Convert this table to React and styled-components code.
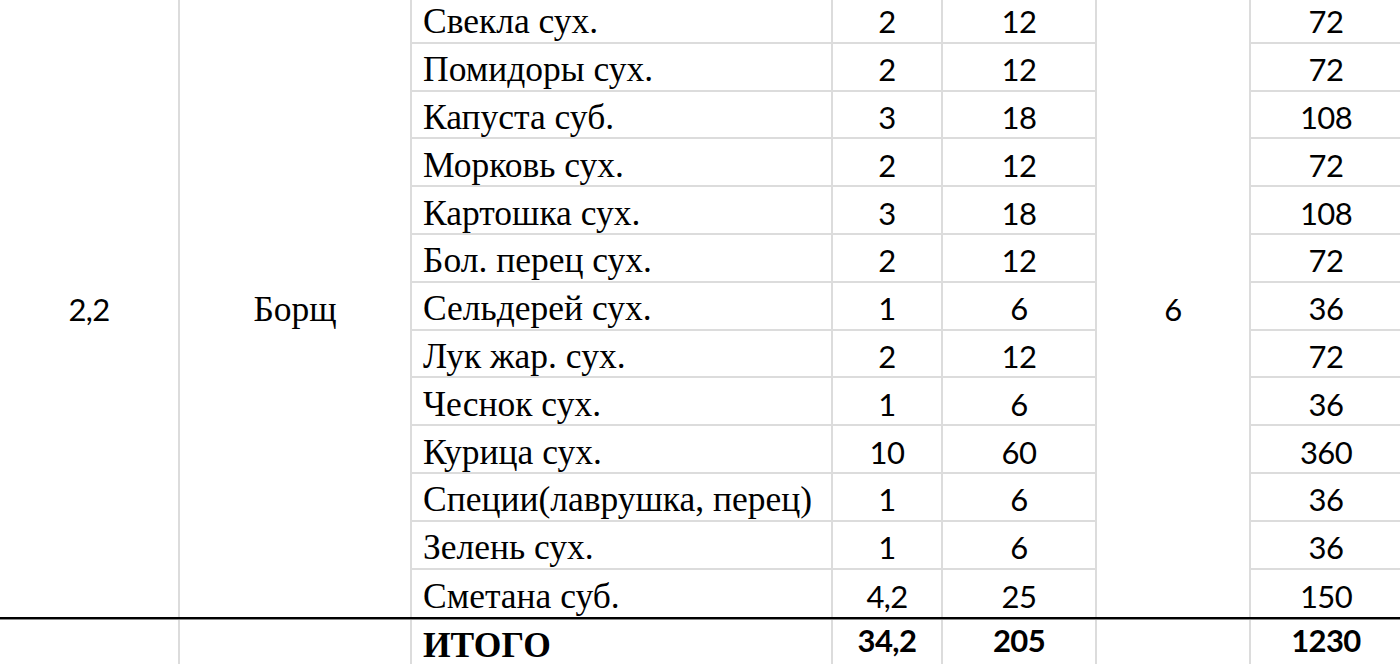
import React from "react";
import styled, { createGlobalStyle, css } from "styled-components";

const Global = createGlobalStyle`
  html, body { margin: 0; padding: 0; background: #fff; }
  body { width: 1400px; height: 664px; overflow: hidden; }
`;

const LINE = "#dcdcdc";

const Sheet = styled.div`
  display: grid;
  grid-template-columns: 180px 232px 421px 110px 154px 154px 152px;
  grid-template-rows: repeat(13, 47.8px) 3px 48px;
  margin-top: -4px;
  width: 1403px;
`;

const serif = css`
  font-family: "Liberation Serif", "Times New Roman", serif;
  font-size: 35.5px;
  padding-top: 5px;
`;
const sans = css`
  font-family: Lato, "Noto Sans", sans-serif;
  font-size: 31px;
  letter-spacing: -0.6px;
  padding-top: 5px;
`;

const Cell = styled.div`
  box-sizing: border-box;
  display: flex;
  align-items: center;
  justify-content: ${(p) => (p.$left ? "flex-start" : "center")};
  padding-left: ${(p) => (p.$left ? "11px" : "0")};
  border-right: 2px solid ${LINE};
  border-bottom: ${(p) => (p.$noBottom ? "none" : `2px solid ${LINE}`)};
  color: #000;
  white-space: nowrap;
  font-weight: ${(p) => (p.$bold ? 700 : 400)};
  ${(p) => (p.$serif ? serif : sans)};
`;

const Merged = styled(Cell)`
  grid-row: 1 / span 13;
  grid-column: ${(p) => p.$col};
  border-bottom: none;
`;

const TotalCell = styled(Cell)`
  border-bottom: none;
  align-items: flex-start;
  padding-top: ${(p) => (p.$serif ? "4px" : "1px")};
`;

const Rule = styled.div`
  grid-column: 1 / -1;
  background: #000;
  border-bottom: 1px solid #8a8a8a;
  box-sizing: border-box;
`;

const rows = [
  ["Свекла сух.", "2", "12", "72"],
  ["Помидоры сух.", "2", "12", "72"],
  ["Капуста суб.", "3", "18", "108"],
  ["Морковь сух.", "2", "12", "72"],
  ["Картошка сух.", "3", "18", "108"],
  ["Бол. перец сух.", "2", "12", "72"],
  ["Сельдерей сух.", "1", "6", "36"],
  ["Лук жар. сух.", "2", "12", "72"],
  ["Чеснок сух.", "1", "6", "36"],
  ["Курица сух.", "10", "60", "360"],
  ["Специи(лаврушка, перец)", "1", "6", "36"],
  ["Зелень сух.", "1", "6", "36"],
  ["Сметана суб.", "4,2", "25", "150"],
];

export default function App() {
  return (
    <>
      <Global />
      <Sheet>
        <Merged $col={1}>2,2</Merged>
        <Merged $col={2} $serif>Борщ</Merged>
        <Merged $col={6}>6</Merged>
        {rows.map(([name, a, b, c], i) => {
          const last = i === rows.length - 1;
          const r = i + 1;
          return (
            <React.Fragment key={name}>
              <Cell style={{ gridRow: r, gridColumn: 3 }} $serif $left $noBottom={last}>{name}</Cell>
              <Cell style={{ gridRow: r, gridColumn: 4 }} $noBottom={last}>{a}</Cell>
              <Cell style={{ gridRow: r, gridColumn: 5 }} $noBottom={last}>{b}</Cell>
              <Cell style={{ gridRow: r, gridColumn: 7 }} $noBottom={last}>{c}</Cell>
            </React.Fragment>
          );
        })}
        <Rule />
        <TotalCell />
        <TotalCell />
        <TotalCell $serif $left $bold>ИТОГО</TotalCell>
        <TotalCell $bold>34,2</TotalCell>
        <TotalCell $bold>205</TotalCell>
        <TotalCell />
        <TotalCell $bold>1230</TotalCell>
      </Sheet>
    </>
  );
}
